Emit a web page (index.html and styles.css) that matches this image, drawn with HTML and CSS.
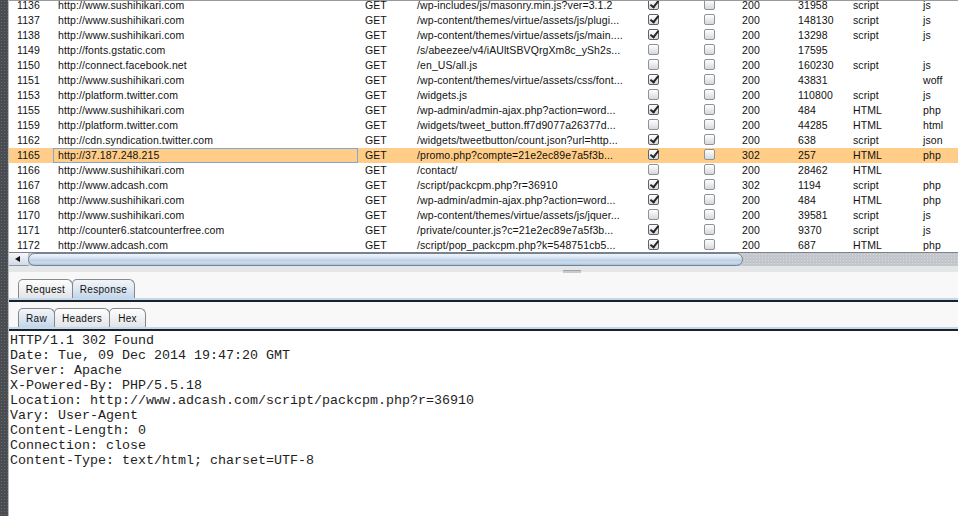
FILE: index.html
```html
<!DOCTYPE html>
<html lang="en">
<head>
    <meta charset="UTF-8">
    <meta name="viewport" content="width=device-width, initial-scale=1.0">
    <title>Proxy History</title>
    <link rel="stylesheet" href="styles.css">
</head>
<body>
    <div class="edge"></div>

    <div class="main">
        <div class="grid-pane">
            <table class="history">
                <colgroup>
                    <col class="c-num"><col class="c-host"><col class="c-method"><col class="c-url">
                    <col class="c-params"><col class="c-edited"><col class="c-status"><col class="c-length">
                    <col class="c-mime"><col class="c-ext">
                </colgroup>
                <tbody>
                    <tr><td class="num">1136</td><td class="host">http://www.sushihikari.com</td><td class="method">GET</td><td class="url">/wp-includes/js/masonry.min.js?ver=3.1.2</td><td class="chk1"><span class="cb on"></span></td><td class="chk2"><span class="cb"></span></td><td class="status">200</td><td class="len">31958</td><td class="mime">script</td><td class="ext">js</td></tr>
                    <tr><td class="num">1137</td><td class="host">http://www.sushihikari.com</td><td class="method">GET</td><td class="url">/wp-content/themes/virtue/assets/js/plugi...</td><td class="chk1"><span class="cb on"></span></td><td class="chk2"><span class="cb"></span></td><td class="status">200</td><td class="len">148130</td><td class="mime">script</td><td class="ext">js</td></tr>
                    <tr><td class="num">1138</td><td class="host">http://www.sushihikari.com</td><td class="method">GET</td><td class="url">/wp-content/themes/virtue/assets/js/main....</td><td class="chk1"><span class="cb on"></span></td><td class="chk2"><span class="cb"></span></td><td class="status">200</td><td class="len">13298</td><td class="mime">script</td><td class="ext">js</td></tr>
                    <tr><td class="num">1149</td><td class="host">http://fonts.gstatic.com</td><td class="method">GET</td><td class="url">/s/abeezee/v4/iAUltSBVQrgXm8c_ySh2s...</td><td class="chk1"><span class="cb"></span></td><td class="chk2"><span class="cb"></span></td><td class="status">200</td><td class="len">17595</td><td class="mime"></td><td class="ext"></td></tr>
                    <tr><td class="num">1150</td><td class="host">http://connect.facebook.net</td><td class="method">GET</td><td class="url">/en_US/all.js</td><td class="chk1"><span class="cb"></span></td><td class="chk2"><span class="cb"></span></td><td class="status">200</td><td class="len">160230</td><td class="mime">script</td><td class="ext">js</td></tr>
                    <tr><td class="num">1151</td><td class="host">http://www.sushihikari.com</td><td class="method">GET</td><td class="url">/wp-content/themes/virtue/assets/css/font...</td><td class="chk1"><span class="cb on"></span></td><td class="chk2"><span class="cb"></span></td><td class="status">200</td><td class="len">43831</td><td class="mime"></td><td class="ext">woff</td></tr>
                    <tr><td class="num">1153</td><td class="host">http://platform.twitter.com</td><td class="method">GET</td><td class="url">/widgets.js</td><td class="chk1"><span class="cb"></span></td><td class="chk2"><span class="cb"></span></td><td class="status">200</td><td class="len">110800</td><td class="mime">script</td><td class="ext">js</td></tr>
                    <tr><td class="num">1155</td><td class="host">http://www.sushihikari.com</td><td class="method">GET</td><td class="url">/wp-admin/admin-ajax.php?action=word...</td><td class="chk1"><span class="cb on"></span></td><td class="chk2"><span class="cb"></span></td><td class="status">200</td><td class="len">484</td><td class="mime">HTML</td><td class="ext">php</td></tr>
                    <tr><td class="num">1159</td><td class="host">http://platform.twitter.com</td><td class="method">GET</td><td class="url">/widgets/tweet_button.ff7d9077a26377d...</td><td class="chk1"><span class="cb"></span></td><td class="chk2"><span class="cb"></span></td><td class="status">200</td><td class="len">44285</td><td class="mime">HTML</td><td class="ext">html</td></tr>
                    <tr><td class="num">1162</td><td class="host">http://cdn.syndication.twitter.com</td><td class="method">GET</td><td class="url">/widgets/tweetbutton/count.json?url=http...</td><td class="chk1"><span class="cb on"></span></td><td class="chk2"><span class="cb"></span></td><td class="status">200</td><td class="len">638</td><td class="mime">script</td><td class="ext">json</td></tr>
                    <tr class="selected"><td class="num">1165</td><td class="host focus">http://37.187.248.215</td><td class="method">GET</td><td class="url">/promo.php?compte=21e2ec89e7a5f3b...</td><td class="chk1"><span class="cb on"></span></td><td class="chk2"><span class="cb"></span></td><td class="status">302</td><td class="len">257</td><td class="mime">HTML</td><td class="ext">php</td></tr>
                    <tr><td class="num">1166</td><td class="host">http://www.sushihikari.com</td><td class="method">GET</td><td class="url">/contact/</td><td class="chk1"><span class="cb"></span></td><td class="chk2"><span class="cb"></span></td><td class="status">200</td><td class="len">28462</td><td class="mime">HTML</td><td class="ext"></td></tr>
                    <tr><td class="num">1167</td><td class="host">http://www.adcash.com</td><td class="method">GET</td><td class="url">/script/packcpm.php?r=36910</td><td class="chk1"><span class="cb on"></span></td><td class="chk2"><span class="cb"></span></td><td class="status">302</td><td class="len">1194</td><td class="mime">script</td><td class="ext">php</td></tr>
                    <tr><td class="num">1168</td><td class="host">http://www.sushihikari.com</td><td class="method">GET</td><td class="url">/wp-admin/admin-ajax.php?action=word...</td><td class="chk1"><span class="cb on"></span></td><td class="chk2"><span class="cb"></span></td><td class="status">200</td><td class="len">484</td><td class="mime">HTML</td><td class="ext">php</td></tr>
                    <tr><td class="num">1170</td><td class="host">http://www.sushihikari.com</td><td class="method">GET</td><td class="url">/wp-content/themes/virtue/assets/js/jquer...</td><td class="chk1"><span class="cb"></span></td><td class="chk2"><span class="cb"></span></td><td class="status">200</td><td class="len">39581</td><td class="mime">script</td><td class="ext">js</td></tr>
                    <tr><td class="num">1171</td><td class="host">http://counter6.statcounterfree.com</td><td class="method">GET</td><td class="url">/private/counter.js?c=21e2ec89e7a5f3b...</td><td class="chk1"><span class="cb on"></span></td><td class="chk2"><span class="cb"></span></td><td class="status">200</td><td class="len">9370</td><td class="mime">script</td><td class="ext">js</td></tr>
                    <tr><td class="num">1172</td><td class="host">http://www.adcash.com</td><td class="method">GET</td><td class="url">/script/pop_packcpm.php?k=548751cb5...</td><td class="chk1"><span class="cb on"></span></td><td class="chk2"><span class="cb"></span></td><td class="status">200</td><td class="len">687</td><td class="mime">HTML</td><td class="ext">php</td></tr>
                </tbody>
            </table>
        </div>

        <div class="hscroll">
            <div class="arrow"><span class="tri"></span></div>
            <div class="thumb"></div>
            <div class="track"></div>
        </div>

        <div class="splitter"><span class="grip"></span></div>

        <div class="viewer">
            <div class="tab-row">
                <div class="tab t-request">Request</div>
                <div class="tab t-response active">Response</div>
            </div>
            <div class="band"></div>

            <div class="tab-row sub">
                <div class="tab t-raw active">Raw</div>
                <div class="tab t-headers">Headers</div>
                <div class="tab t-hex">Hex</div>
            </div>
            <div class="band"></div>

            <div class="message">
<pre>HTTP/1.1 302 Found
Date: Tue, 09 Dec 2014 19:47:20 GMT
Server: Apache
X-Powered-By: PHP/5.5.18
Location: http://www.adcash.com/script/packcpm.php?r=36910
Vary: User-Agent
Content-Length: 0
Connection: close
Content-Type: text/html; charset=UTF-8</pre>
            </div>
        </div>
    </div>
</body>
</html>
```

FILE: styles.css
```css
html, body {
    margin: 0;
    height: 100%;
}
body {
    display: flex;
    overflow: hidden;
    background: #f8f8f8;
    font-family: 'Liberation Sans', Arial, sans-serif;
    color: #000;
}
.edge {
    width: 8px;
    flex: none;
    background-color: #494c51;
    background-image: radial-gradient(#676a6f 0.7px, transparent 0.9px);
    background-size: 3px 3px;
}
.main {
    flex: 1;
    min-width: 0;
    display: flex;
    flex-direction: column;
    border-left: 1px solid #b7babe;
}

/* history table */
.grid-pane {
    height: 251px;
    flex: none;
    overflow: hidden;
    background: #fff;
    border-top: 1px solid #9a9a9a;
}
.history {
    width: 968px;
    table-layout: fixed;
    border-collapse: collapse;
    border-spacing: 0;
    margin-top: -3px;
    font-size: 10.5px;
    letter-spacing: 0.1px;
}
.c-num { width: 44px; }
.c-host { width: 305px; }
.c-method { width: 54px; }
.c-url { width: 223px; }
.c-params { width: 50px; }
.c-edited { width: 50px; }
.c-status { width: 56px; }
.c-length { width: 56px; }
.c-mime { width: 70px; }
.c-ext { width: 60px; }
.history td {
    height: 15px;
    padding: 0;
    line-height: 15px;
    white-space: nowrap;
    overflow: hidden;
    box-sizing: border-box;
    color: #111;
}
.num { padding-left: 8px !important; }
.host { padding-left: 5px !important; }
.method { padding-left: 7px !important; }
.url { padding-left: 5px !important; }
.chk1 { padding-left: 13px !important; }
.chk2 { padding-left: 19px !important; }
.status, .len { padding-left: 7px !important; }
.mime, .ext { padding-left: 6px !important; }
.selected td {
    background: #ffcd87;
}
.focus {
    outline: 1px solid #7ea6d6;
    outline-offset: -1px;
}

.cb {
    display: inline-block;
    position: relative;
    width: 9px;
    height: 9px;
    border: 1px solid #8f9297;
    border-radius: 2px;
    background: linear-gradient(#ffffff, #d6d8dc);
    vertical-align: -1px;
}
.cb.on {
    border-color: #5f6268;
}
.cb.on::after {
    content: "";
    position: absolute;
    left: 3px;
    top: -1px;
    width: 3px;
    height: 7px;
    border: solid #262626;
    border-width: 0 2px 2px 0;
    transform: rotate(38deg);
}

/* horizontal scrollbar */
.hscroll {
    height: 13px;
    flex: none;
    display: flex;
    border-top: 1px solid #7f8288;
    background: #c6c9cd;
}
.arrow {
    width: 19px;
    display: flex;
    align-items: center;
    justify-content: center;
    background: linear-gradient(#f4f6f9, #d2dbe6);
    border-bottom: 1px solid #8b98a8;
    box-sizing: border-box;
}
.tri {
    width: 0;
    height: 0;
    border-top: 3px solid transparent;
    border-bottom: 3px solid transparent;
    border-right: 5px solid #111;
    margin-right: 3px;
}
.thumb {
    width: 715px;
    box-sizing: border-box;
    border: 1px solid #6f8299;
    border-radius: 7px;
    background: linear-gradient(#f1f5fa 0%, #d7e4f1 35%, #bcd1e6 55%, #cbdbeb 80%, #a9bfd6 100%);
}
.track {
    flex: 1;
    background-color: #c3c6cb;
    background-image: radial-gradient(#d8dadd 0.6px, transparent 0.8px);
    background-size: 3px 3px;
}

.splitter {
    height: 6px;
    flex: none;
    background: #e5e6e8;
    padding-left: 554px;
    display: flex;
    align-items: flex-end;
}
.grip {
    width: 18px;
    height: 2px;
    margin-bottom: -1px;
    border-top: 1px solid #a3a6aa;
    background: #c8cacd;
}

/* message viewer */
.viewer {
    flex: 1;
    display: flex;
    flex-direction: column;
    padding-top: 7px;
}
.tab-row {
    display: flex;
    height: 19px;
    padding-left: 9px;
    flex: none;
}
.tab-row.sub {
    margin-top: 6px;
}
.tab {
    box-sizing: border-box;
    height: 19px;
    border: 1px solid #85888d;
    border-bottom: none;
    border-radius: 5px 6px 0 0;
    background: linear-gradient(#fdfdfd, #e2e4e7);
    font-size: 10px;
    letter-spacing: 0.3px;
    line-height: 19px;
    text-align: center;
    color: #111;
}
.tab + .tab {
    margin-left: -1px;
}
.tab.active {
    background: linear-gradient(#f3f5f8 0%, #dbe6f2 55%, #c3d6ea 100%);
}
.t-request { width: 55px; }
.t-response { width: 63px; }
.t-raw { width: 37px; }
.t-headers { width: 56px; }
.t-hex { width: 37px; }
.band {
    height: 2px;
    flex: none;
    background: #c4d7eb;
    border-bottom: 2px solid #18212c;
}
.message {
    flex: 1;
    background: #fff;
    padding: 2px 0 0 1px;
}
.message pre {
    margin: 0;
    font-family: 'Liberation Mono', 'Courier New', monospace;
    font-size: 13.33px;
    line-height: 15px;
    color: #1e1e1e;
}
```
